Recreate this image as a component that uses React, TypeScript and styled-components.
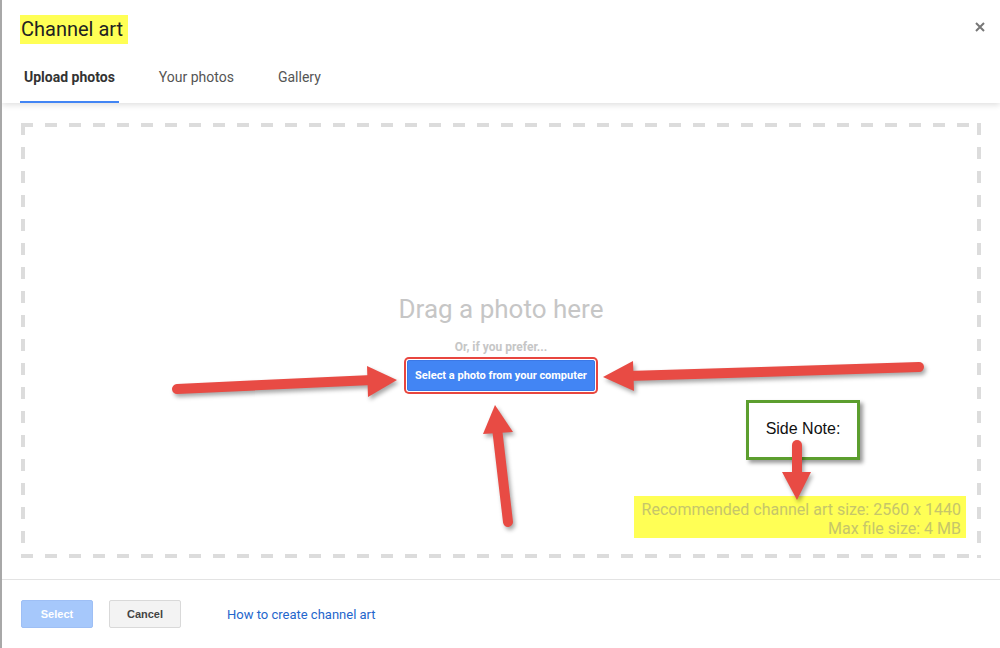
import React from 'react';
import styled, { createGlobalStyle } from 'styled-components';

const GlobalStyle = createGlobalStyle`
  html, body {
    margin: 0;
    padding: 0;
    background: #fff;
  }
  body {
    font-family: Roboto, "Liberation Sans", Arial, sans-serif;
  }
`;

const ARROW_RED = '#e84b44';

interface ArrowProps {
    from: [number, number]
    to: [number, number]
    tip: [number, number]
    base: [[number, number], [number, number]]
}

const Arrow: React.FC<ArrowProps> = ({ from, to, tip, base }) => (
    <g>
        <line x1={from[0]} y1={from[1]} x2={to[0]} y2={to[1]} stroke={ARROW_RED} strokeWidth={10} strokeLinecap="round" />
        <polygon points={`${tip[0]},${tip[1]} ${base[0][0]},${base[0][1]} ${base[1][0]},${base[1][1]}`} fill={ARROW_RED} />
    </g>
)

const tabs = [
    { label: 'Upload photos', active: true },
    { label: 'Your photos', active: false },
    { label: 'Gallery', active: false },
];

const App: React.FC = () => {
    return (
        <>
            <GlobalStyle />
            <Dialog>
                <Header>
                    <TitleRow>
                        <Title>Channel art</Title>
                        <CloseButton aria-label="Close">
                            <svg width="10" height="10" viewBox="0 0 10 10">
                                <path d="M1 1 L9 9 M9 1 L1 9" stroke="#777" strokeWidth="2" />
                            </svg>
                        </CloseButton>
                    </TitleRow>
                    <TabBar>
                        {tabs.map(tab => (
                            <Tab key={tab.label} active={tab.active}>{tab.label}</Tab>
                        ))}
                    </TabBar>
                </Header>

                <Body>
                    <DropZone>
                        <Spacer />
                        <CenterGroup>
                            <DragText>Drag a photo here</DragText>
                            <PreferText>Or, if you prefer...</PreferText>
                            <UploadButton>Select a photo from your computer</UploadButton>
                        </CenterGroup>
                        <InfoRow>
                            <InfoText>
                                <div>Recommended channel art size: 2560 x 1440</div>
                                <div>Max file size: 4 MB</div>
                            </InfoText>
                        </InfoRow>
                    </DropZone>
                </Body>

                <Footer>
                    <SelectButton disabled>Select</SelectButton>
                    <CancelButton>Cancel</CancelButton>
                    <HelpLink href="#">How to create channel art</HelpLink>
                </Footer>

                <SideNote>Side Note:</SideNote>

                <Annotations width="1000" height="648" viewBox="0 0 1000 648">
                    <Arrow from={[177, 389]} to={[372, 380]} tip={[397, 380]} base={[[367, 366], [368, 397]]} />
                    <Arrow from={[919, 367]} to={[628, 376]} tip={[603, 377]} base={[[633, 361], [634, 391]]} />
                    <Arrow from={[508, 522]} to={[497, 428]} tip={[495, 405]} base={[[483, 434], [513, 432]]} />
                    <Arrow from={[797, 445]} to={[797, 476]} tip={[797, 500]} base={[[782, 472], [811, 472]]} />
                </Annotations>
            </Dialog>
        </>
    )
}

const Dialog = styled.div`
    position: relative;
    width: 1000px;
    height: 648px;
    box-sizing: border-box;
    border-left: 2px solid #a8a8a8;
    background: #fff;
    overflow: hidden;
    display: flex;
    flex-direction: column;
`;

const Header = styled.div`
    position: relative;
    z-index: 1;
    height: 103px;
    box-sizing: border-box;
    padding: 15px 15px 0 18px;
    display: flex;
    flex-direction: column;
    background: #fff;
    box-shadow: 0 2px 6px rgba(0, 0, 0, 0.13);
`;

const TitleRow = styled.div`
    display: flex;
    justify-content: space-between;
    align-items: flex-start;
`;

const Title = styled.h1`
    margin: 0;
    padding: 2px 5px 3px 1px;
    background: #ffff55;
    color: #222;
    font-size: 20px;
    font-weight: 400;
    line-height: 24px;
`;

const CloseButton = styled.button`
    border: none;
    background: none;
    padding: 0;
    margin-top: 7px;
    width: 10px;
    height: 10px;
    display: flex;
`;

const TabBar = styled.div`
    display: flex;
    gap: 36px;
    margin-top: auto;
`;

const Tab = styled.div<{ active: boolean }>`
    padding: 0 4px 6px;
    height: 45px;
    display: flex;
    align-items: center;
    box-sizing: border-box;
    border-bottom: 2px solid ${props => props.active ? '#4285f4' : 'transparent'};
    color: ${props => props.active ? '#333' : '#555'};
    font-size: 14px;
    font-weight: ${props => props.active ? 700 : 400};
`;

const Body = styled.div`
    height: 477px;
    box-sizing: border-box;
    padding: 20px 19px 21px 19px;
    border-bottom: 1px solid #e3e3e3;
`;

const DropZone = styled.div`
    height: 100%;
    box-sizing: border-box;
    display: grid;
    grid-template-rows: 1fr auto 1fr;
    padding: 4px;
    background:
        repeating-linear-gradient(to right, #dcdcdc 0 12px, transparent 12px 24px) top left / 100% 4px no-repeat,
        repeating-linear-gradient(to right, #dcdcdc 0 12px, transparent 12px 24px) bottom left / 100% 4px no-repeat,
        repeating-linear-gradient(to bottom, #dcdcdc 0 12px, transparent 12px 24px) top left / 4px 100% no-repeat,
        repeating-linear-gradient(to bottom, #dcdcdc 0 12px, transparent 12px 24px) top right / 4px 100% no-repeat;
`;

const Spacer = styled.div``;

const CenterGroup = styled.div`
    display: flex;
    flex-direction: column;
    align-items: center;
    padding-top: 4px;
`;

const DragText = styled.div`
    color: #c6c6c6;
    font-size: 26px;
    line-height: 30px;
`;

const PreferText = styled.div`
    margin-top: 16px;
    color: #c6c6c6;
    font-size: 12px;
    font-weight: 700;
    line-height: 14px;
`;

const UploadButton = styled.button`
    margin-top: 6px;
    width: 188px;
    height: 31px;
    padding: 0;
    white-space: nowrap;
    border: 1px solid #3b78e7;
    border-radius: 2px;
    background: #4285f4;
    color: #fff;
    font-family: Roboto, "Liberation Sans", Arial, sans-serif;
    font-size: 11px;
    font-weight: 700;
    box-shadow: 0 0 0 1px #fff, 0 0 0 3px #e8463f;
`;

const InfoRow = styled.div`
    display: flex;
    justify-content: flex-end;
    align-items: flex-end;
    padding: 0 11px 16px 0;
`;

const InfoText = styled.div`
    background: #ffff55;
    padding: 4px 5px 0 8px;
    color: #c6c66a;
    font-size: 16px;
    line-height: 19px;
    text-align: right;
`;

const Footer = styled.div`
    display: flex;
    align-items: center;
    padding: 20px 0 0 19px;
`;

const FooterButton = styled.button`
    width: 72px;
    height: 28px;
    border-radius: 2px;
    font-family: "Liberation Sans", Arial, sans-serif;
    font-size: 11px;
    font-weight: 700;
`;

const SelectButton = styled(FooterButton)`
    background: #a6c8fb;
    border: 1px solid #9ebff5;
    color: #fff;
`;

const CancelButton = styled(FooterButton)`
    margin-left: 16px;
    background: #f3f3f3;
    border: 1px solid #d9d9d9;
    color: #444;
`;

const HelpLink = styled.a`
    margin-left: 46px;
    color: #2466cc;
    font-size: 13px;
    text-decoration: none;
`;

const SideNote = styled.div`
    position: absolute;
    left: 744px;
    top: 400px;
    width: 114px;
    height: 60px;
    box-sizing: border-box;
    border: 3px solid #5c9e2e;
    background: #fff;
    box-shadow: 3px 3px 4px rgba(0, 0, 0, 0.4);
    display: flex;
    align-items: center;
    justify-content: center;
    padding-bottom: 2px;
    font-family: "Liberation Sans", Arial, sans-serif;
    font-size: 16px;
    color: #111;
`;

const Annotations = styled.svg`
    position: absolute;
    left: -2px;
    top: 0;
    pointer-events: none;
    z-index: 2;
    filter: drop-shadow(2px 3px 2px rgba(0, 0, 0, 0.35));
`;

export default App
